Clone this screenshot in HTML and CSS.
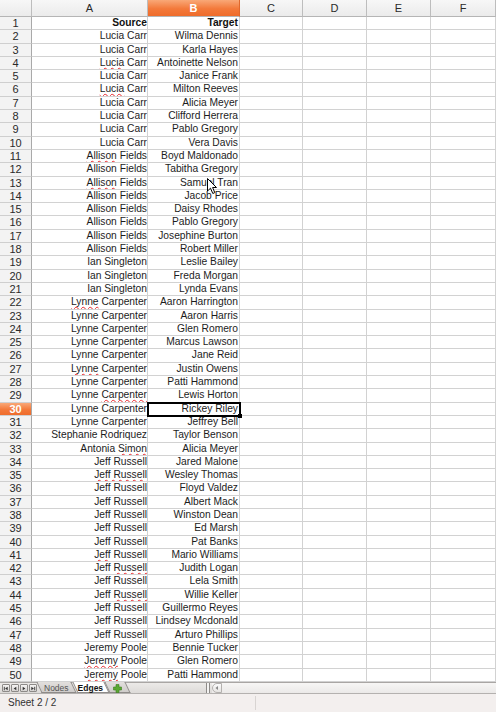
FILE: index.html
```html
<!DOCTYPE html>
<html>
<head>
<meta charset="utf-8">
<link rel="stylesheet" href="styles.css">
</head>
<body>
<div class="app">
  <div class="sheet">
    <div class="row hdr"><div class="corner"></div><div class="ch">A</div><div class="ch sel">B</div><div class="ch">C</div><div class="ch">D</div><div class="ch">E</div><div class="ch">F</div></div>
    <div class="row"><div class="rh">1</div><div class="c b">Source</div><div class="c b">Target</div><div class="c"></div><div class="c"></div><div class="c"></div><div class="c"></div></div>
    <div class="row"><div class="rh">2</div><div class="c">Lucia Carr</div><div class="c">Wilma Dennis</div><div class="c"></div><div class="c"></div><div class="c"></div><div class="c"></div></div>
    <div class="row"><div class="rh">3</div><div class="c">Lucia Carr</div><div class="c">Karla Hayes</div><div class="c"></div><div class="c"></div><div class="c"></div><div class="c"></div></div>
    <div class="row"><div class="rh">4</div><div class="c"><span class="sp">Lucia</span> Carr</div><div class="c">Antoinette Nelson</div><div class="c"></div><div class="c"></div><div class="c"></div><div class="c"></div></div>
    <div class="row"><div class="rh">5</div><div class="c">Lucia Carr</div><div class="c">Janice Frank</div><div class="c"></div><div class="c"></div><div class="c"></div><div class="c"></div></div>
    <div class="row"><div class="rh">6</div><div class="c"><span class="sp">Lucia</span> Carr</div><div class="c">Milton Reeves</div><div class="c"></div><div class="c"></div><div class="c"></div><div class="c"></div></div>
    <div class="row"><div class="rh">7</div><div class="c">Lucia Carr</div><div class="c">Alicia Meyer</div><div class="c"></div><div class="c"></div><div class="c"></div><div class="c"></div></div>
    <div class="row"><div class="rh">8</div><div class="c">Lucia Carr</div><div class="c">Clifford Herrera</div><div class="c"></div><div class="c"></div><div class="c"></div><div class="c"></div></div>
    <div class="row"><div class="rh">9</div><div class="c">Lucia Carr</div><div class="c">Pablo Gregory</div><div class="c"></div><div class="c"></div><div class="c"></div><div class="c"></div></div>
    <div class="row"><div class="rh">10</div><div class="c">Lucia Carr</div><div class="c">Vera Davis</div><div class="c"></div><div class="c"></div><div class="c"></div><div class="c"></div></div>
    <div class="row"><div class="rh">11</div><div class="c"><span class="sp">Allison</span> Fields</div><div class="c">Boyd Maldonado</div><div class="c"></div><div class="c"></div><div class="c"></div><div class="c"></div></div>
    <div class="row"><div class="rh">12</div><div class="c">Allison Fields</div><div class="c">Tabitha Gregory</div><div class="c"></div><div class="c"></div><div class="c"></div><div class="c"></div></div>
    <div class="row"><div class="rh">13</div><div class="c"><span class="sp">Allison</span> Fields</div><div class="c">Samuel Tran</div><div class="c"></div><div class="c"></div><div class="c"></div><div class="c"></div></div>
    <div class="row"><div class="rh">14</div><div class="c">Allison Fields</div><div class="c">Jacob Price</div><div class="c"></div><div class="c"></div><div class="c"></div><div class="c"></div></div>
    <div class="row"><div class="rh">15</div><div class="c">Allison Fields</div><div class="c">Daisy Rhodes</div><div class="c"></div><div class="c"></div><div class="c"></div><div class="c"></div></div>
    <div class="row"><div class="rh">16</div><div class="c">Allison Fields</div><div class="c">Pablo Gregory</div><div class="c"></div><div class="c"></div><div class="c"></div><div class="c"></div></div>
    <div class="row"><div class="rh">17</div><div class="c">Allison Fields</div><div class="c">Josephine Burton</div><div class="c"></div><div class="c"></div><div class="c"></div><div class="c"></div></div>
    <div class="row"><div class="rh">18</div><div class="c">Allison Fields</div><div class="c">Robert Miller</div><div class="c"></div><div class="c"></div><div class="c"></div><div class="c"></div></div>
    <div class="row"><div class="rh">19</div><div class="c">Ian Singleton</div><div class="c">Leslie Bailey</div><div class="c"></div><div class="c"></div><div class="c"></div><div class="c"></div></div>
    <div class="row"><div class="rh">20</div><div class="c">Ian Singleton</div><div class="c">Freda Morgan</div><div class="c"></div><div class="c"></div><div class="c"></div><div class="c"></div></div>
    <div class="row"><div class="rh">21</div><div class="c">Ian Singleton</div><div class="c">Lynda Evans</div><div class="c"></div><div class="c"></div><div class="c"></div><div class="c"></div></div>
    <div class="row"><div class="rh">22</div><div class="c"><span class="sp">Lynne</span> Carpenter</div><div class="c">Aaron Harrington</div><div class="c"></div><div class="c"></div><div class="c"></div><div class="c"></div></div>
    <div class="row"><div class="rh">23</div><div class="c">Lynne Carpenter</div><div class="c">Aaron Harris</div><div class="c"></div><div class="c"></div><div class="c"></div><div class="c"></div></div>
    <div class="row"><div class="rh">24</div><div class="c">Lynne Carpenter</div><div class="c">Glen Romero</div><div class="c"></div><div class="c"></div><div class="c"></div><div class="c"></div></div>
    <div class="row"><div class="rh">25</div><div class="c">Lynne Carpenter</div><div class="c">Marcus Lawson</div><div class="c"></div><div class="c"></div><div class="c"></div><div class="c"></div></div>
    <div class="row"><div class="rh">26</div><div class="c">Lynne Carpenter</div><div class="c">Jane Reid</div><div class="c"></div><div class="c"></div><div class="c"></div><div class="c"></div></div>
    <div class="row"><div class="rh">27</div><div class="c"><span class="sp">Lynne</span> Carpenter</div><div class="c">Justin Owens</div><div class="c"></div><div class="c"></div><div class="c"></div><div class="c"></div></div>
    <div class="row"><div class="rh">28</div><div class="c">Lynne Carpenter</div><div class="c">Patti Hammond</div><div class="c"></div><div class="c"></div><div class="c"></div><div class="c"></div></div>
    <div class="row"><div class="rh">29</div><div class="c">Lynne <span class="sp">Carpenter</span></div><div class="c">Lewis Horton</div><div class="c"></div><div class="c"></div><div class="c"></div><div class="c"></div></div>
    <div class="row"><div class="rh sel">30</div><div class="c">Lynne Carpenter</div><div class="c cur">Rickey Riley</div><div class="c"></div><div class="c"></div><div class="c"></div><div class="c"></div></div>
    <div class="row"><div class="rh">31</div><div class="c">Lynne Carpenter</div><div class="c">Jeffrey Bell</div><div class="c"></div><div class="c"></div><div class="c"></div><div class="c"></div></div>
    <div class="row"><div class="rh">32</div><div class="c">Stephanie Rodriquez</div><div class="c">Taylor Benson</div><div class="c"></div><div class="c"></div><div class="c"></div><div class="c"></div></div>
    <div class="row"><div class="rh">33</div><div class="c">Antonia <span class="sp">Simon</span></div><div class="c">Alicia Meyer</div><div class="c"></div><div class="c"></div><div class="c"></div><div class="c"></div></div>
    <div class="row"><div class="rh">34</div><div class="c">Jeff Russell</div><div class="c">Jared Malone</div><div class="c"></div><div class="c"></div><div class="c"></div><div class="c"></div></div>
    <div class="row"><div class="rh">35</div><div class="c"><span class="sp">Jeff Russell</span></div><div class="c">Wesley Thomas</div><div class="c"></div><div class="c"></div><div class="c"></div><div class="c"></div></div>
    <div class="row"><div class="rh">36</div><div class="c">Jeff Russell</div><div class="c">Floyd Valdez</div><div class="c"></div><div class="c"></div><div class="c"></div><div class="c"></div></div>
    <div class="row"><div class="rh">37</div><div class="c">Jeff Russell</div><div class="c">Albert Mack</div><div class="c"></div><div class="c"></div><div class="c"></div><div class="c"></div></div>
    <div class="row"><div class="rh">38</div><div class="c">Jeff Russell</div><div class="c">Winston Dean</div><div class="c"></div><div class="c"></div><div class="c"></div><div class="c"></div></div>
    <div class="row"><div class="rh">39</div><div class="c">Jeff Russell</div><div class="c">Ed Marsh</div><div class="c"></div><div class="c"></div><div class="c"></div><div class="c"></div></div>
    <div class="row"><div class="rh">40</div><div class="c">Jeff Russell</div><div class="c">Pat Banks</div><div class="c"></div><div class="c"></div><div class="c"></div><div class="c"></div></div>
    <div class="row"><div class="rh">41</div><div class="c"><span class="sp">Jeff</span> Russell</div><div class="c">Mario Williams</div><div class="c"></div><div class="c"></div><div class="c"></div><div class="c"></div></div>
    <div class="row"><div class="rh">42</div><div class="c">Jeff <span class="sp">Russell</span></div><div class="c">Judith Logan</div><div class="c"></div><div class="c"></div><div class="c"></div><div class="c"></div></div>
    <div class="row"><div class="rh">43</div><div class="c">Jeff Russell</div><div class="c">Lela Smith</div><div class="c"></div><div class="c"></div><div class="c"></div><div class="c"></div></div>
    <div class="row"><div class="rh">44</div><div class="c">Jeff <span class="sp">Russell</span></div><div class="c">Willie Keller</div><div class="c"></div><div class="c"></div><div class="c"></div><div class="c"></div></div>
    <div class="row"><div class="rh">45</div><div class="c">Jeff Russell</div><div class="c">Guillermo Reyes</div><div class="c"></div><div class="c"></div><div class="c"></div><div class="c"></div></div>
    <div class="row"><div class="rh">46</div><div class="c">Jeff Russell</div><div class="c">Lindsey Mcdonald</div><div class="c"></div><div class="c"></div><div class="c"></div><div class="c"></div></div>
    <div class="row"><div class="rh">47</div><div class="c">Jeff Russell</div><div class="c">Arturo Phillips</div><div class="c"></div><div class="c"></div><div class="c"></div><div class="c"></div></div>
    <div class="row"><div class="rh">48</div><div class="c">Jeremy Poole</div><div class="c">Bennie Tucker</div><div class="c"></div><div class="c"></div><div class="c"></div><div class="c"></div></div>
    <div class="row"><div class="rh">49</div><div class="c"><span class="sp">Jeremy</span> Poole</div><div class="c">Glen Romero</div><div class="c"></div><div class="c"></div><div class="c"></div><div class="c"></div></div>
    <div class="row"><div class="rh">50</div><div class="c"><span class="sp">Jeremy</span> Poole</div><div class="c">Patti Hammond</div><div class="c"></div><div class="c"></div><div class="c"></div><div class="c"></div></div>
  </div>

  <div class="tabbar">
    <div class="navs">
      <span class="nb"><svg width="7" height="7" viewBox="0 0 7 7"><rect x="1" y="1.5" width="1" height="4" fill="#333"/><path d="M5.5 1.5 L2.5 3.5 L5.5 5.5Z" fill="#333"/></svg></span>
      <span class="nb"><svg width="7" height="7" viewBox="0 0 7 7"><path d="M5 1.5 L2 3.5 L5 5.5Z" fill="#333"/></svg></span>
      <span class="nb"><svg width="7" height="7" viewBox="0 0 7 7"><path d="M2 1.5 L5 3.5 L2 5.5Z" fill="#333"/></svg></span>
      <span class="nb"><svg width="7" height="7" viewBox="0 0 7 7"><path d="M1.5 1.5 L4.5 3.5 L1.5 5.5Z" fill="#333"/><rect x="5" y="1.5" width="1" height="4" fill="#333"/></svg></span>
    </div>
    <div class="tab">Nodes</div>
    <div class="tab act">Edges</div>
    <div class="tab add"><svg width="9" height="9" viewBox="0 0 9 9"><path d="M3 0.5h3v2.5h2.5v3H6v2.5H3V6H0.5V3H3Z" fill="#5aa832" stroke="#3d7d1f" stroke-width="0.6"/></svg></div>
    <div class="gap"></div>
    <div class="grip"></div>
    <div class="hscroll">
      <span class="sbtn"><svg width="6" height="6" viewBox="0 0 6 6"><path d="M4 1 L1.5 3 L4 5Z" fill="#888"/></svg></span>
      <span class="track"></span>
    </div>
  </div>

  <div class="status">
    <span class="st1">Sheet 2 / 2</span>
    <span class="st2"></span>
  </div>

  <svg class="pointer" width="11" height="17" viewBox="0 0 11 17"><path d="M0.5 0.5 L0.5 13 L3.5 10.2 L5.8 15.5 L7.8 14.6 L5.6 9.5 L9.5 9.5 Z" fill="#fff" stroke="#000" stroke-width="1" stroke-linejoin="round"/></svg>
</div>
</body>
</html>
```
FILE: styles.css
```css
* { box-sizing: border-box; }
html, body { margin: 0; padding: 0; }
body {
  width: 496px;
  height: 712px;
  overflow: hidden;
  background: #ffffff;
  font-family: "Liberation Sans", Arial, sans-serif;
  font-size: 10px;
  color: #1e1e1e;
}
.app {
  position: relative;
  width: 496px;
  height: 712px;
  display: flex;
  flex-direction: column;
}
.sheet {
  display: flex;
  flex-direction: column;
  height: 682px;
  overflow: hidden;
}
.row {
  display: grid;
  grid-template-columns: 32px 116px 92px 63px 64px 64px 65px;
  height: 13.3px;
  flex: none;
}
.row.hdr { height: 17px; }
.corner, .ch {
  background: linear-gradient(#f7f7f7, #ebebeb);
  border-right: 1px solid #bdbdbd;
  border-bottom: 1px solid #b5b5b5;
}
.ch {
  text-align: center;
  line-height: 16px;
  font-size: 11px;
  color: #2a2a2a;
}
.ch.sel {
  background: linear-gradient(#f9a877, #f3793a 55%, #ef6c2b);
  color: #ffffff;
  font-weight: bold;
  border-right-color: #e0682c;
}
.rh {
  background: #f3f3f3;
  border-right: 1px solid #a9a9a9;
  border-bottom: 1px solid #cfcfcf;
  text-align: center;
  font-size: 11px;
  line-height: 12.3px;
  color: #2a2a2a;
}
.rh.sel {
  background: linear-gradient(#f9a877, #f3793a 55%, #ef6c2b);
  color: #fff;
  font-weight: bold;
}
.c {
  border-right: 1px solid #d2d2d2;
  border-bottom: 1px solid #d2d2d2;
  text-align: right;
  padding-right: 1px;
  line-height: 12.3px;
  white-space: nowrap;
  overflow: hidden;
  font-size: 10.25px;
  color: #1c1c1c;
}
.c:nth-child(2) { padding-right: 0; }
.c.b { font-weight: bold; color: #111; }
.c.cur {
  position: relative;
  overflow: visible;
  outline: 2px solid #000;
  outline-offset: -1px;
}
.c.cur::after {
  content: "";
  position: absolute;
  right: -3px;
  bottom: -3px;
  width: 4px;
  height: 4px;
  background: #000;
}
.sp {
  text-decoration: underline wavy #e8262a;
  text-decoration-thickness: 1px;
  text-underline-offset: 1px;
  text-decoration-skip-ink: none;
}

.tabbar {
  height: 12px;
  flex: none;
  display: flex;
  align-items: stretch;
  background: linear-gradient(#eceae8, #dddad8);
  border-top: 1px solid #a9a6a4;
  border-bottom: 1px solid #b4b1af;
}
.navs {
  display: flex;
  gap: 1px;
  padding: 1px 2px 0 2px;
}
.nb {
  width: 8px;
  height: 8px;
  border: 1px solid #8d8a88;
  border-radius: 1px;
  background: linear-gradient(#f6f5f4, #d6d3d1);
  display: flex;
  align-items: center;
  justify-content: center;
}
.nb svg { display: block; }
.tab {
  position: relative;
  padding: 0 5px;
  font-size: 8.5px;
  line-height: 10px;
  color: #555;
  z-index: 0;
}
.tab::before {
  content: "";
  position: absolute;
  top: -1px;
  bottom: 0;
  left: 0;
  right: 0;
  border: 1px solid #8e8b89;
  border-top: none;
  background: linear-gradient(#e2dfdd, #cfccca);
  transform: skewX(25deg);
  z-index: -1;
}
.tab:first-of-type { margin-left: 4px; padding: 0 6px 0 5px; }
.tab.act {
  color: #111;
  font-weight: bold;
  margin-left: 1px;
  padding: 0 3px;
}
.tab.act::before { background: #ffffff; }
.tab.add {
  margin-left: 1px;
  padding: 0 6px;
  display: flex;
  align-items: center;
}
.tab.add svg { display: block; }
.gap { flex: 1; }
.grip {
  width: 4px;
  border-left: 1px solid #8e8b89;
  border-right: 1px solid #8e8b89;
  background: #f4f3f2;
  margin-right: 2px;
}
.hscroll {
  width: 284px;
  display: flex;
  background: linear-gradient(#f7f6f5, #ebe9e8);
}
.sbtn {
  width: 10px;
  border: 1px solid #b4b1af;
  border-radius: 5px 0 0 5px;
  background: linear-gradient(#fbfbfb, #e6e4e2);
  display: flex;
  align-items: center;
  justify-content: center;
}
.track { flex: 1; }

.status {
  flex: 1;
  display: flex;
  align-items: center;
  background: #f3efee;
  font-size: 10px;
  color: #333;
}
.st1 {
  width: 255px;
  padding-left: 8px;
  line-height: 16px;
}
.st2 {
  height: 14px;
  border-left: 1px solid #d8d4d2;
}
.pointer {
  position: absolute;
  left: 207px;
  top: 178px;
}
```
